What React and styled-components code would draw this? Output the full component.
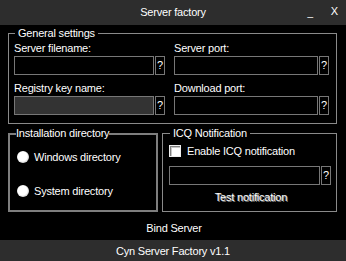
import React from 'react';
import styled, { createGlobalStyle } from 'styled-components';

const GlobalStyle = createGlobalStyle`
  html, body {
    margin: 0;
    padding: 0;
    background: #000;
  }
  body {
    color: #fff;
    font-family: "Liberation Sans", Arial, sans-serif;
    font-size: 11px;
    letter-spacing: -0.2px;
  }
`;

const Window = styled.div`
  width: 346px;
  height: 261px;
  display: flex;
  flex-direction: column;
  background: #000;
  overflow: hidden;
`;

const TitleBar = styled.div`
  height: 25px;
  flex: none;
  display: grid;
  grid-template-columns: 1fr auto 1fr;
  align-items: center;
  background: #2d2d2d;

  h1 {
    grid-column: 2;
    margin: 0;
    font-size: 11px;
    font-weight: normal;
    line-height: 13px;
  }
`;

const Controls = styled.div`
  justify-self: end;
  display: flex;
  align-items: center;
  gap: 18px;
  padding-right: 8px;
  padding-bottom: 3px;
`;

const ControlButton = styled.span`
  font-size: ${(p) => (p.$small ? '10px' : '11px')};
  line-height: 13px;
  position: relative;
  top: ${(p) => (p.$small ? '1px' : '0')};
`;

const Main = styled.div`
  display: flex;
  flex-direction: column;
  gap: 3px;
  padding: 2px 9px 0 8px;
`;

const GroupBox = styled.fieldset`
  margin: 0;
  min-width: 0;
  border: ${(p) => (p.$thick ? '2px solid #7e7e7e' : '1px solid #8a8a8a')};
  padding: ${(p) => p.$pad};
`;

const Legend = styled.legend`
  font-size: 11px;
  line-height: 13px;
  padding: ${(p) => (p.$tight ? '0' : '0 3px')};
  margin-left: ${(p) => (p.$tight ? '0' : '1px')};
`;

const FieldGrid = styled.div`
  display: grid;
  grid-template-columns: 151px 155px;
  column-gap: 9px;
  row-gap: 7px;
`;

const Field = styled.div`
  display: flex;
  flex-direction: column;
  gap: 1px;
`;

const Label = styled.label`
  line-height: 13px;
`;

const InputRow = styled.div`
  display: flex;
  gap: 1px;
  height: 19px;
`;

const TextBox = styled.input`
  flex: 1;
  min-width: 0;
  margin: 0;
  padding: 0 3px;
  box-sizing: border-box;
  height: 100%;
  border: 1px solid #777;
  border-radius: 0;
  background: ${(p) => (p.disabled ? '#333' : '#000')};
  color: #fff;
  font: inherit;
  outline: none;
`;

const HelpButton = styled.button`
  width: 10px;
  flex: none;
  margin: 0;
  padding: 0;
  box-sizing: border-box;
  height: 100%;
  border: 1px solid #777;
  border-radius: 0;
  background: #000;
  color: #fff;
  font-family: inherit;
  font-size: 11px;
  line-height: 15px;
  text-align: center;
`;

const LowerRow = styled.div`
  display: grid;
  grid-template-columns: 150px 175px;
  column-gap: 4px;
`;

const OptionList = styled.div`
  display: flex;
  flex-direction: column;
  gap: 18px;
  padding-top: 9px;
`;

const Option = styled.label`
  display: flex;
  align-items: center;
  gap: 5px;
  height: 16px;
  padding-left: 1px;
  line-height: 13px;
`;

const RadioDot = styled.span`
  width: 12px;
  height: 12px;
  flex: none;
  border-radius: 50%;
  background: radial-gradient(circle at 45% 45%, #fff 0%, #fff 50%, #d8d8d8 68%, #7a7a7a 100%);
`;

const CheckBox = styled.span`
  width: 12px;
  height: 12px;
  flex: none;
  box-sizing: border-box;
  background: #fff;
  border: 1px solid #f0f0f0;
  box-shadow: inset 1px 1px 0 #808080, inset 2px 2px 0 #c8c8c8;
`;

const IcqBody = styled.div`
  display: flex;
  flex-direction: column;
  padding-top: 3px;
`;

const CheckRow = styled(Option)`
  gap: 6px;
  padding-left: 0;
  margin-bottom: 7px;
`;

const TestButton = styled.div`
  height: 24px;
  display: flex;
  align-items: center;
  justify-content: center;
  padding-left: 2px;
  text-shadow: 1px 1px 0 #808080;
`;

const BindButton = styled.div`
  flex: 1;
  display: flex;
  align-items: center;
  justify-content: center;
  padding-top: 3px;
  padding-left: 2px;
`;

const StatusBar = styled.div`
  height: 21px;
  flex: none;
  display: flex;
  align-items: center;
  justify-content: center;
  background: #2d2d2d;
`;

const fields = [
  { label: 'Server filename:' },
  { label: 'Server port:' },
  { label: 'Registry key name:', disabled: true },
  { label: 'Download port:' },
];

export default function App() {
  return (
    <Window>
      <GlobalStyle />
      <TitleBar>
        <h1>Server factory</h1>
        <Controls>
          <ControlButton $small>_</ControlButton>
          <ControlButton>X</ControlButton>
        </Controls>
      </TitleBar>

      <Main>
        <GroupBox $pad="2px 7px 8px 5px">
          <Legend>General settings</Legend>
          <FieldGrid>
            {fields.map((f) => (
              <Field key={f.label}>
                <Label>{f.label}</Label>
                <InputRow>
                  <TextBox disabled={f.disabled} readOnly />
                  <HelpButton>?</HelpButton>
                </InputRow>
              </Field>
            ))}
          </FieldGrid>
        </GroupBox>

        <LowerRow>
          <GroupBox $thick $pad="0 4px 3px 6px">
            <Legend $tight>Installation directory</Legend>
            <OptionList>
              <Option>
                <RadioDot />
                Windows directory
              </Option>
              <Option>
                <RadioDot />
                System directory
              </Option>
            </OptionList>
          </GroupBox>

          <GroupBox $pad="0 5px 2px 6px">
            <Legend>ICQ Notification</Legend>
            <IcqBody>
              <CheckRow>
                <CheckBox />
                Enable ICQ notification
              </CheckRow>
              <InputRow>
                <TextBox readOnly />
                <HelpButton>?</HelpButton>
              </InputRow>
              <TestButton>Test notification</TestButton>
            </IcqBody>
          </GroupBox>
        </LowerRow>
      </Main>

      <BindButton>Bind Server</BindButton>
      <StatusBar>Cyn Server Factory v1.1</StatusBar>
    </Window>
  );
}
